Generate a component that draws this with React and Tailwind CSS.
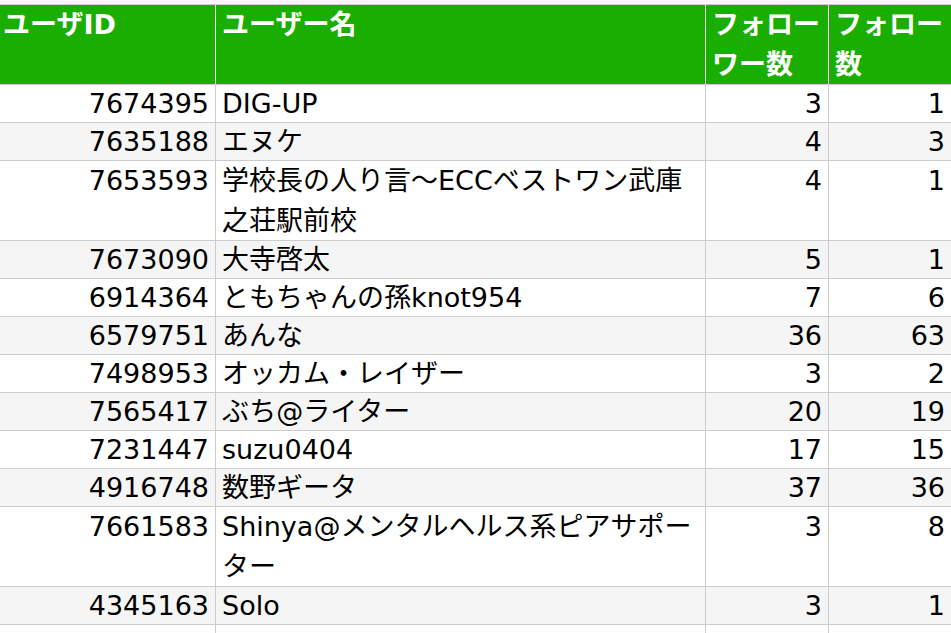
import React from "react";

const rows = [
  { id: "7674395", name: ["DIG-UP"], a: "3", b: "1" },
  { id: "7635188", name: ["エヌケ"], a: "4", b: "3" },
  { id: "7653593", name: ["学校長の人り言〜ECCベストワン武庫", "之荘駅前校"], a: "4", b: "1" },
  { id: "7673090", name: ["大寺啓太"], a: "5", b: "1" },
  { id: "6914364", name: ["ともちゃんの孫knot954"], a: "7", b: "6" },
  { id: "6579751", name: ["あんな"], a: "36", b: "63" },
  { id: "7498953", name: ["オッカム・レイザー"], a: "3", b: "2" },
  { id: "7565417", name: ["ぶち@ライター"], a: "20", b: "19" },
  { id: "7231447", name: ["suzu0404"], a: "17", b: "15" },
  { id: "4916748", name: ["数野ギータ"], a: "37", b: "36" },
  { id: "7661583", name: ["Shinya@メンタルヘルス系ピアサポー", "ター"], a: "3", b: "8" },
  { id: "4345163", name: ["Solo"], a: "3", b: "1" },
  { id: "", name: [""], a: "", b: "" },
];

const font = { fontFamily: '"DejaVu Sans", "Noto Sans CJK JP", sans-serif' };

export default function App() {
  return (
    <div className="w-[951px] h-[633px] overflow-hidden bg-white pt-[4px]" style={font}>
      <div className="ml-[-2px] w-[955px] border-t border-[#cccccc] text-[27px] text-black">
        <div className="flex bg-[#1aaf00] text-white font-bold leading-[39.5px] border-b border-[#cccccc]">
          <div className="w-[218px] shrink-0 border-r border-white pl-[5px] pr-[6px]">ユーザID</div>
          <div className="w-[490px] shrink-0 border-r border-white px-[6px]">ユーザー名</div>
          <div className="w-[123px] shrink-0 border-r border-white px-[6px]">フォロー<br />ワー数</div>
          <div className="w-[123px] shrink-0 border-r border-white px-[6px]">フォロー<br />数</div>
        </div>
        {rows.map((r, i) => {
          const two = r.name.length > 1;
          return (
            <div
              key={i}
              className={
                "flex border-b border-[#cccccc] " +
                (i % 2 === 1 ? "bg-[#f5f5f5] " : "bg-white ") +
                (two ? "leading-[39.5px]" : "leading-[37px]")
              }
            >
              <div className="w-[218px] shrink-0 border-r border-[#cccccc] px-[6px] text-right">{r.id || "\u00a0"}</div>
              <div className="w-[490px] shrink-0 border-r border-[#cccccc] px-[6px] whitespace-nowrap">
                {r.name.map((t, j) => (
                  <div key={j}>{t || "\u00a0"}</div>
                ))}
              </div>
              <div className="w-[123px] shrink-0 border-r border-[#cccccc] px-[6px] text-right">{r.a || "\u00a0"}</div>
              <div className="w-[123px] shrink-0 border-r border-[#cccccc] px-[6px] text-right">{r.b || "\u00a0"}</div>
            </div>
          );
        })}
      </div>
    </div>
  );
}
